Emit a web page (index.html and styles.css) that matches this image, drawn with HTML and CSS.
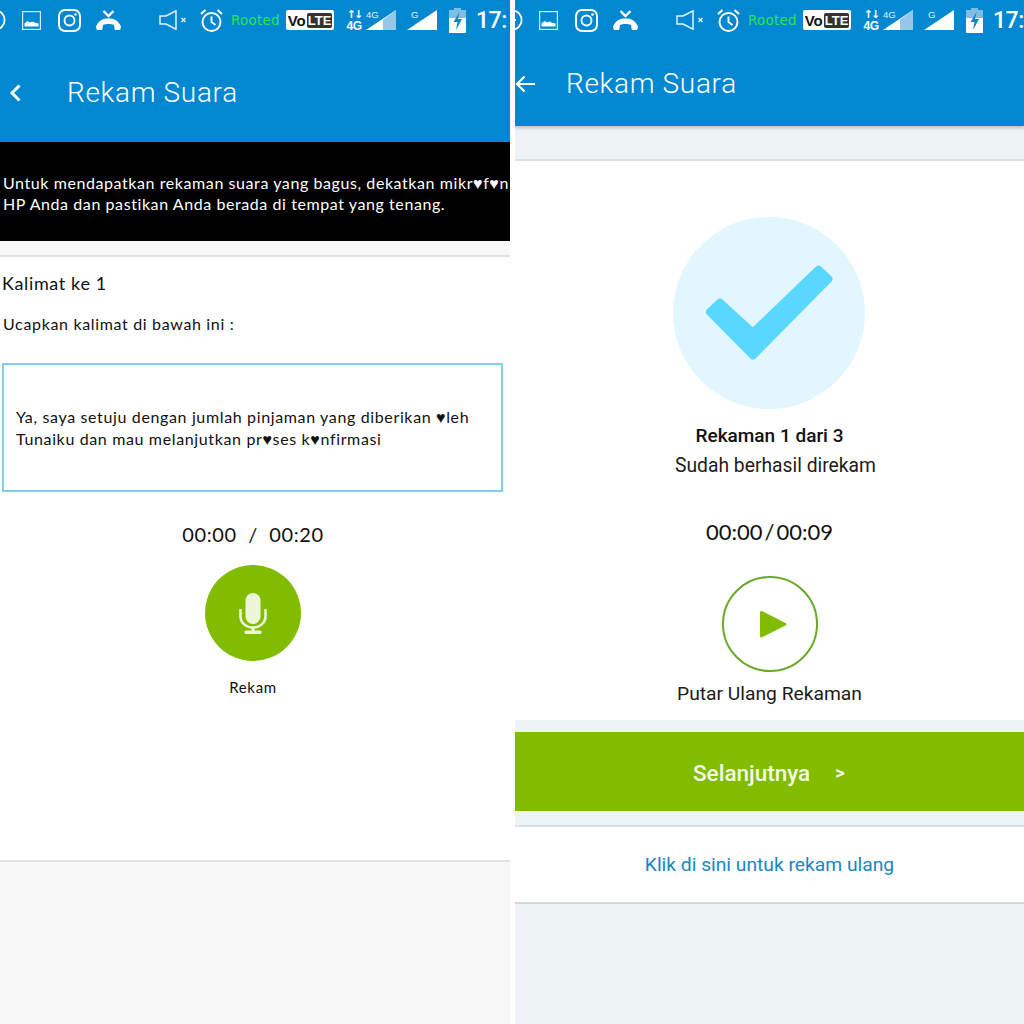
FILE: index.html
```html
<!DOCTYPE html>
<html lang="en">
<head>
  <meta charset="UTF-8">
  <title>Rekam Suara</title>
  <meta name="viewport" content="width=device-width, initial-scale=1.0">
  <link rel="stylesheet" href="styles.css">
</head>
<body>
  <svg class="sprites" xmlns="http://www.w3.org/2000/svg">
    <symbol id="i-clock" viewBox="0 0 22 22"><circle cx="11" cy="11" r="9.6" fill="none" stroke="#fff" stroke-width="1.8"/><path d="M11 11V5M11 11h4" stroke="#fff" stroke-width="1.8" fill="none"/></symbol>
    <symbol id="i-image" viewBox="0 0 19 19"><rect x=".6" y=".6" width="17.8" height="17.8" fill="none" stroke="#d5ebf7" stroke-width="1.2"/><path d="M2.500 15.500v-3l3-2.500 2.500 1.500 2.500-1 2 1 4 1v3z" fill="#fff"/></symbol>
    <symbol id="i-insta" viewBox="0 0 23 23"><rect x="1" y="1" width="21" height="21" rx="6" fill="none" stroke="#fff" stroke-width="1.900"/><circle cx="11.500" cy="11.500" r="5" fill="none" stroke="#fff" stroke-width="1.900"/><circle cx="17.500" cy="5.500" r="1.300" fill="#fff"/></symbol>
    <symbol id="i-call" viewBox="0 0 25 21"><path d="M7.500 1l5 5 5-5" fill="none" stroke="#fff" stroke-width="2.400"/><path d="M0 16.500C3 10 7.500 8.500 12.500 8.500S22 10 25 16.500l-.8 3.500h-5.400l-.8-5c-3-1.400-8-1.400-11 0l-.8 5H.8z" fill="#fff"/></symbol>
    <symbol id="i-mute" viewBox="0 0 28 20"><path d="M1 6h6l10-5.200v18.400L7 14H1z" fill="none" stroke="#e3f2fa" stroke-width="1.500"/><path d="M22.500 8l4 4M26.500 8l-4 4" stroke="#d5ebf7" stroke-width="1.500"/></symbol>
    <symbol id="i-alarm" viewBox="0 0 23 23"><circle cx="11.500" cy="13" r="9" fill="none" stroke="#fff" stroke-width="1.900"/><path d="M11.500 7.500V13l4 3" fill="none" stroke="#fff" stroke-width="1.900"/><path d="M1 5l4.500-4M22 5l-4.500-4" stroke="#fff" stroke-width="2"/></symbol>
    <symbol id="i-battery" viewBox="0 0 17 25"><path d="M5 0h7v2h5v8H0V2h5z" fill="#7fbde3"/><path d="M0 10h17v15H0z" fill="#fff"/><path d="M10.500 4L4.500 14h4l-1.500 8 6-11H9z" fill="#0288d1"/></symbol>
    <symbol id="i-signal-4g" viewBox="0 0 30 20"><path d="M30 0v20H0z" fill="#fff"/><path d="M17 9.800L30 0v20H17z" fill="#93c8e8"/></symbol>
    <symbol id="i-signal" viewBox="0 0 30 20"><path d="M30 0v20H0z" fill="#fff"/></symbol>
  </svg>

  <div class="screens">
    <!-- kiri: mulai rekam -->
    <section class="pane pane-left">
      <header class="appbar appbar-tall">
        <div class="status">
          <svg class="st-clock"><use href="#i-clock"/></svg>
          <svg class="st-image"><use href="#i-image"/></svg>
          <svg class="st-insta"><use href="#i-insta"/></svg>
          <svg class="st-call"><use href="#i-call"/></svg>
          <svg class="st-mute"><use href="#i-mute"/></svg>
          <svg class="st-alarm"><use href="#i-alarm"/></svg>
          <span class="st-rooted">Rooted</span>
          <span class="st-volte">Vo<b>LTE</b></span>
          <span class="st-net"><i>↑↓</i><b>4G</b></span>
          <span class="st-signal st-signal-a"><svg><use href="#i-signal-4g"/></svg><small>4G</small></span>
          <span class="st-signal st-signal-b"><svg><use href="#i-signal"/></svg><small>G</small></span>
          <svg class="st-battery"><use href="#i-battery"/></svg>
          <span class="st-time">17:</span>
        </div>
        <div class="toolbar">
          <svg class="back-chevron" viewBox="0 0 13 20"><path d="M10.500 2.500L3 10l7.500 7.500" fill="none" stroke="#fff" stroke-width="3"/></svg>
          <h1>Rekam Suara</h1>
        </div>
      </header>

      <div class="notice">Untuk mendapatkan rekaman suara yang bagus, dekatkan mikr♥f♥n<br>HP Anda dan pastikan Anda berada di tempat yang tenang.</div>
      <div class="spacer-left"></div>

      <div class="record-card">
        <div class="sentence-no">Kalimat ke 1</div>
        <div class="sentence-hint">Ucapkan kalimat di bawah ini :</div>
        <div class="sentence-box">Ya, saya setuju dengan jumlah pinjaman yang diberikan ♥leh<br>Tunaiku dan mau melanjutkan pr♥ses k♥nfirmasi</div>
        <div class="timer-left">00:00 &nbsp;/&nbsp; 00:20</div>
        <div class="mic-btn">
          <svg viewBox="0 0 96 96" width="96" height="96">
            <rect x="40.500" y="28" width="15" height="31" rx="7.500" fill="#eef6d8"/>
            <path d="M35.500 44v7c0 7 5.500 11.500 12.500 11.500S60.500 58 60.500 51v-7" fill="none" stroke="#eef6d8" stroke-width="2.600"/>
            <path d="M48 62v5" stroke="#eef6d8" stroke-width="3"/>
            <rect x="39.500" y="65.500" width="17" height="3.500" rx="1.500" fill="#eef6d8"/>
          </svg>
        </div>
        <div class="mic-label">Rekam</div>
      </div>
      <div class="fill-left"></div>
    </section>

    <!-- kanan: sudah direkam -->
    <section class="pane pane-right">
      <header class="appbar appbar-short">
        <div class="status">
          <svg class="st-clock"><use href="#i-clock"/></svg>
          <svg class="st-image"><use href="#i-image"/></svg>
          <svg class="st-insta"><use href="#i-insta"/></svg>
          <svg class="st-call"><use href="#i-call"/></svg>
          <svg class="st-mute"><use href="#i-mute"/></svg>
          <svg class="st-alarm"><use href="#i-alarm"/></svg>
          <span class="st-rooted">Rooted</span>
          <span class="st-volte">Vo<b>LTE</b></span>
          <span class="st-net"><i>↑↓</i><b>4G</b></span>
          <span class="st-signal st-signal-a"><svg><use href="#i-signal-4g"/></svg><small>4G</small></span>
          <span class="st-signal st-signal-b"><svg><use href="#i-signal"/></svg><small>G</small></span>
          <svg class="st-battery"><use href="#i-battery"/></svg>
          <span class="st-time">17:</span>
        </div>
        <div class="toolbar">
          <svg class="back-arrow" viewBox="0 0 20 18"><path d="M20 9H2M9.500 1.500L2 9l7.500 7.500" fill="none" stroke="#fff" stroke-width="2.200"/></svg>
          <h1>Rekam Suara</h1>
        </div>
      </header>

      <div class="spacer-right"></div>

      <div class="result-card">
        <div class="check-circle">
          <svg viewBox="0 0 192 192" width="192" height="192">
            <path d="M47 85.600L37 95 80 138.400 155.400 62 145.500 52.600 80 115.600z" fill="#5ad7ff" stroke="#5ad7ff" stroke-width="8" stroke-linejoin="round"/>
          </svg>
        </div>
        <div class="result-title">Rekaman 1 dari 3</div>
        <div class="result-sub">Sudah berhasil direkam</div>
        <div class="timer-right">00:00<span class="slash">/</span>00:09</div>
        <div class="play-btn">
          <svg viewBox="0 0 96 96" width="96" height="96">
            <circle cx="48" cy="48" r="47" fill="none" stroke="#6aaa2a" stroke-width="2"/>
            <path d="M38 36.500c0-1.500 1-2 2.500-1.200L63.500 47c1.300.7 1.300 1.700 0 2.400L40.500 61c-1.500.8-2.500.3-2.500-1.200z" fill="#82bc00"/>
          </svg>
        </div>
        <div class="play-label">Putar Ulang Rekaman</div>
      </div>

      <div class="next-wrap">
        <div class="next-btn"><span>Selanjutnya</span><span class="next-mark">&gt;</span></div>
      </div>

      <div class="retake">Klik di sini untuk rekam ulang</div>
      <div class="fill-right"></div>
    </section>
  </div>
</body>
</html>
```

FILE: styles.css
```css
html, body {
  margin: 0;
  height: 1024px;
  overflow: hidden;
  background: #fff;
}
.sprites { display: none; }
.screens {
  display: grid;
  grid-template-columns: 510px 509px;
  gap: 5px;
  height: 1024px;
}
.pane {
  display: flex;
  flex-direction: column;
  overflow: hidden;
  height: 1024px;
}
.pane-left { font-family: Lato, sans-serif; color: #111; }
.pane-right { font-family: Roboto, sans-serif; color: #1c1c1c; background: #eef3f6; }

/* app bar */
.appbar { background: #0288d1; color: #fff; flex: none; }
.appbar-tall { height: 142px; }
.appbar-short { height: 126px; box-shadow: 0 2px 3px rgba(0,0,0,0.22); position: relative; }
.appbar h1 {
  margin: 0;
  font-family: Roboto, sans-serif;
  font-weight: 300;
  font-size: 28px;
  letter-spacing: 0.66px;
  line-height: 34px;
}
.toolbar { display: flex; align-items: center; }
.appbar-tall .toolbar { height: 106px; padding-left: 9px; }
.appbar-short .toolbar { height: 88px; }
.back-chevron { width: 13px; height: 20px; margin-right: 45px; }
.back-arrow { width: 20px; height: 18px; margin-right: 31px; }

/* status bar */
.status {
  display: flex;
  align-items: center;
  height: 40px;
  white-space: nowrap;
  margin-left: -16px;
}
.pane-right .status { margin-left: -14px; }
.st-clock { width: 22px; height: 22px; flex: none; }
.st-image { width: 19px; height: 19px; margin-left: 16px; flex: none; }
.st-insta { width: 23px; height: 23px; margin-left: 17px; flex: none; }
.st-call { width: 25px; height: 21px; margin-left: 15px; flex: none; }
.st-mute { width: 28px; height: 20px; margin-left: 38px; flex: none; }
.st-alarm { width: 23px; height: 23px; margin-left: 13px; flex: none; }
.st-rooted {
  width: 51px;
  margin-left: 8px;
  font: 13.500px "DejaVu Sans", sans-serif;
  letter-spacing: 0.2px;
  color: #25e64b;
  flex: none;
  overflow: hidden;
}
.st-volte {
  display: flex;
  align-items: center;
  justify-content: center;
  gap: 1px;
  width: 48px;
  height: 20px;
  margin-left: 4px;
  background: #fff;
  border-radius: 2px;
  color: #111;
  font: bold 15px "Liberation Sans", sans-serif;
  flex: none;
}
.st-volte b {
  background: #333;
  color: #fff;
  border-radius: 2px;
  font-size: 13px;
  line-height: 15px;
  padding: 0 1px;
}
.st-net {
  display: flex;
  flex-direction: column;
  align-items: center;
  width: 14px;
  margin-left: 13px;
  font-family: "Liberation Sans", sans-serif;
  flex: none;
}
.st-net i { font: bold 11px/11px "DejaVu Sans", sans-serif; letter-spacing: -2px; }
.st-net b { font-size: 12px; line-height: 12px; letter-spacing: -0.5px; }
.st-signal {
  position: relative;
  width: 30px;
  height: 20px;
  flex: none;
}
.st-signal svg { width: 30px; height: 20px; display: block; }
.st-signal small {
  position: absolute;
  top: -1px;
  font: 9.500px/11px "Liberation Sans", sans-serif;
  color: #e3f2fa;
}
.st-signal-a { margin-left: 5px; }
.st-signal-a small { left: 0; }
.st-signal-b { margin-left: 11px; }
.st-signal-b small { left: 4px; }
.st-battery { width: 17px; height: 25px; margin-left: 12px; flex: none; }
.st-time {
  margin-left: 10px;
  font: 500 23px Roboto, sans-serif;
  letter-spacing: -0.5px;
  flex: none;
}

/* kiri */
.notice {
  flex: none;
  box-sizing: border-box;
  height: 99px;
  padding: 30px 0 0 3px;
  background: #000;
  color: #fff;
  font-size: 16px;
  line-height: 21px;
  letter-spacing: 0.58px;
  white-space: nowrap;
  overflow: hidden;
}
.spacer-left { flex: none; height: 14px; background: #f8f8f8; border-bottom: 2px solid #e2e2e2; }
.record-card {
  flex: none;
  box-sizing: border-box;
  height: 605px;
  background: #fff;
  border-bottom: 2px solid #e2e2e2;
}
.sentence-no {
  padding: 15px 0 0 2px;
  font-size: 18px;
  line-height: 22px;
  letter-spacing: 0.63px;
}
.sentence-hint {
  padding: 20px 0 0 3px;
  font-size: 16px;
  line-height: 20px;
  letter-spacing: 0.66px;
}
.sentence-box {
  box-sizing: border-box;
  width: 501px;
  height: 129px;
  margin: 29px 0 0 2px;
  padding: 41px 0 0 12px;
  border: 2px solid #7fd0f0;
  font-size: 16px;
  line-height: 22px;
  letter-spacing: 0.64px;
  white-space: nowrap;
}
.timer-left {
  margin-top: 29px;
  text-align: center;
  width: 506px;
  font-size: 20px;
  line-height: 26px;
  letter-spacing: 0.6px;
}
.mic-btn {
  width: 96px;
  height: 96px;
  margin: 18px 0 0 205px;
  border-radius: 50%;
  background: #82bc00;
}
.mic-label {
  width: 506px;
  margin-top: 16px;
  text-align: center;
  font-size: 15px;
  line-height: 20px;
  letter-spacing: 0.7px;
}
.fill-left { flex: 1; background: #f8f8f8; }

/* kanan */
.spacer-right { flex: none; height: 33px; border-bottom: 2px solid #dde1e4; }
.result-card {
  flex: none;
  box-sizing: border-box;
  height: 559px;
  padding-top: 56px;
  background: #fff;
  display: flex;
  flex-direction: column;
  align-items: center;
}
.check-circle {
  width: 192px;
  height: 192px;
  border-radius: 50%;
  background: #e2f6fd;
  margin-left: -1px;
}
.result-title {
  margin: 15px 0 0 0;
  font-weight: 500;
  font-size: 19px;
  line-height: 24px;
  color: #111;
}
.result-sub {
  margin: 6px 0 0 12px;
  font-size: 19.300px;
  line-height: 24px;
}
.timer-right {
  margin: 40px 0 0 0;
  font-family: Lato, sans-serif;
  font-size: 22px;
  line-height: 28px;
  color: #111;
}
.timer-right .slash { padding: 0 2px; }
.play-btn {
  width: 96px;
  height: 96px;
  margin-top: 30px;
}
.play-label {
  margin-top: 10px;
  font-size: 19.250px;
  line-height: 24px;
}
.next-wrap { flex: none; padding: 12px 0 14px; }
.next-btn {
  display: flex;
  align-items: center;
  box-sizing: border-box;
  height: 79px;
  padding: 2px 0 0 178px;
  background: #82bc00;
  color: #f4f9e6;
  font-weight: 500;
  font-size: 22.500px;
}
.next-mark { margin-left: 25px; font-size: 18px; font-weight: 700; }
.retake {
  flex: none;
  box-sizing: border-box;
  height: 79px;
  border-top: 2px solid #dde1e4;
  border-bottom: 2px solid #d3d7da;
  background: #fff;
  text-align: center;
  line-height: 76px;
  font-size: 19.250px;
  color: #1a86c4;
}
.fill-right { flex: 1; }
```
